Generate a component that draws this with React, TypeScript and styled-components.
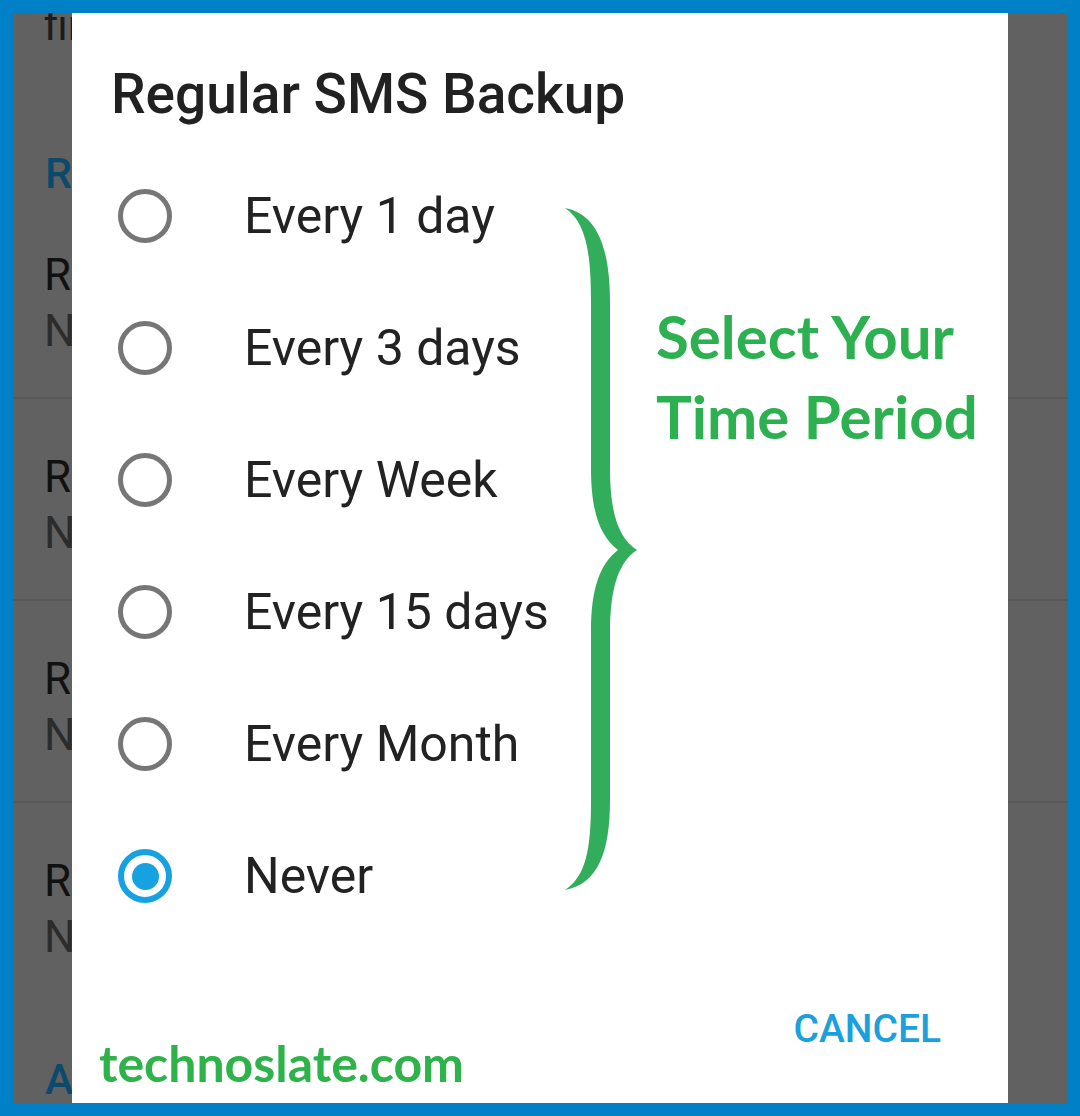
import React from "react";
import styled, { createGlobalStyle } from "styled-components";

const GlobalStyle = createGlobalStyle`
  html, body { margin: 0; padding: 0; background: #0080c6; }
  * { box-sizing: border-box; }
`;

const Frame = styled.div`
  position: relative;
  width: 1080px;
  height: 1116px;
  overflow: hidden;
  border-style: solid;
  border-color: #0080c6;
  border-width: 13px 12px 13px 13px;
  background: #616161;
  font-family: Roboto, "Liberation Sans", sans-serif;
`;

/* ---------- dimmed settings screen behind the dialog ---------- */
const Backdrop = styled.div`
  display: flex;
  flex-direction: column;
  height: 100%;
  padding-left: 31px;
`;

const SummaryTail = styled.div`
  margin-top: -16px;
  height: 56px;
  font-size: 43px;
  line-height: 56px;
  color: #1c1c1c;
`;

const CategoryTitle = styled.div<{ $gap: number }>`
  margin-top: ${(p) => p.$gap}px;
  margin-left: 1px;
  font-size: 43px;
  line-height: 48px;
  font-weight: 500;
  color: #0c4a6b;
`;

const PrefItem = styled.div<{ $last?: boolean }>`
  height: 203px;
  margin-left: -31px;
  padding: 50px 0 0 31px;
  border-bottom: 2px solid ${(p) => (p.$last ? "transparent" : "#585858")};
  display: flex;
  flex-direction: column;
`;

const PrefTitle = styled.div`
  font-size: 44px;
  line-height: 56px;
  color: #111111;
`;

const PrefSummary = styled.div`
  font-size: 44px;
  line-height: 56px;
  color: #2c2c2c;
`;

/* ---------- dialog ---------- */
const Dialog = styled.div`
  position: absolute;
  left: 59px;
  top: 0;
  bottom: 0;
  width: 936px;
  background: #ffffff;
  display: flex;
  flex-direction: column;
`;

const Title = styled.h1`
  margin: 0;
  padding: 49px 0 0 39px;
  font-size: 55px;
  line-height: 64px;
  font-weight: 500;
  color: #212121;
`;

const OptionList = styled.div`
  margin-top: 24px;
  display: flex;
  flex-direction: column;
`;

const OptionRow = styled.div`
  height: 132px;
  display: flex;
  align-items: center;
  padding-left: 46px;
  gap: 72px;
`;

const Radio = styled.span<{ $checked?: boolean }>`
  flex: none;
  width: 54px;
  height: 54px;
  border-radius: 50%;
  border: ${(p) => (p.$checked ? "6px solid #16a2e0" : "5px solid #767676")};
  display: flex;
  align-items: center;
  justify-content: center;
  &::after {
    content: "";
    display: ${(p) => (p.$checked ? "block" : "none")};
    width: 27px;
    height: 27px;
    border-radius: 50%;
    background: #16a2e0;
  }
`;

const OptionLabel = styled.span`
  font-size: 50px;
  line-height: 64px;
  color: #222222;
`;

const Actions = styled.div`
  margin-top: auto;
  padding: 0 67px 50px 0;
  display: flex;
  justify-content: flex-end;
`;

const TextButton = styled.button`
  border: none;
  background: none;
  padding: 0;
  font-family: Roboto, "Liberation Sans", sans-serif;
  font-size: 39px;
  line-height: 48px;
  font-weight: 500;
  color: #1ca0dc;
`;

/* ---------- annotations drawn over the screenshot ---------- */
const Brace = styled.svg`
  position: absolute;
  left: 542px;
  top: 187px;
  width: 90px;
  height: 700px;
`;

const Callout = styled.div`
  position: absolute;
  left: 643px;
  top: 283px;
  font-family: Lato, "Open Sans", sans-serif;
  font-weight: 700;
  font-size: 60px;
  line-height: 80px;
  color: #2db050;
`;

const Watermark = styled.div`
  position: absolute;
  left: 86px;
  top: 1025px;
  font-family: Lato, "Open Sans", sans-serif;
  font-weight: 700;
  font-size: 50px;
  line-height: 50px;
  color: #2db34a;
`;

const options = [
  "Every 1 day",
  "Every 3 days",
  "Every Week",
  "Every 15 days",
  "Every Month",
  "Never",
];

export default function App() {
  return (
    <>
      <GlobalStyle />
      <Frame>
        <Backdrop>
          <SummaryTail>find your backups</SummaryTail>
          <CategoryTitle $gap={96}>Regular backups</CategoryTitle>
          <PrefItem>
            <PrefTitle>Regular SMS Backup</PrefTitle>
            <PrefSummary>Never</PrefSummary>
          </PrefItem>
          <PrefItem>
            <PrefTitle>Regular Call Logs Backup</PrefTitle>
            <PrefSummary>Never</PrefSummary>
          </PrefItem>
          <PrefItem>
            <PrefTitle>Regular Contacts Backup</PrefTitle>
            <PrefSummary>Never</PrefSummary>
          </PrefItem>
          <PrefItem $last>
            <PrefTitle>Regular Calendar Backup</PrefTitle>
            <PrefSummary>Never</PrefSummary>
          </PrefItem>
          <CategoryTitle $gap={50}>Advanced</CategoryTitle>
        </Backdrop>

        <Dialog>
          <Title>Regular SMS Backup</Title>
          <OptionList>
            {options.map((o) => (
              <OptionRow key={o}>
                <Radio $checked={o === "Never"} />
                <OptionLabel>{o}</OptionLabel>
              </OptionRow>
            ))}
          </OptionList>
          <Actions>
            <TextButton>CANCEL</TextButton>
          </Actions>
        </Dialog>

        <Brace viewBox="555 200 90 700" aria-hidden>
          <path
            fill="#31ad5b"
            d="M565 208 C598 214 610 250 610 302 L610 468 C610 512 618 538 637 550 C618 562 610 590 610 632 L610 800 C610 852 598 884 565 890 C586 876 591 850 591 800 L591 632 C591 588 600 564 618 550 C600 536 591 512 591 468 L591 302 C591 252 586 222 565 208 Z"
          />
        </Brace>
        <Callout>
          Select Your
          <br />
          Time Period
        </Callout>
        <Watermark>technoslate.com</Watermark>
      </Frame>
    </>
  );
}
